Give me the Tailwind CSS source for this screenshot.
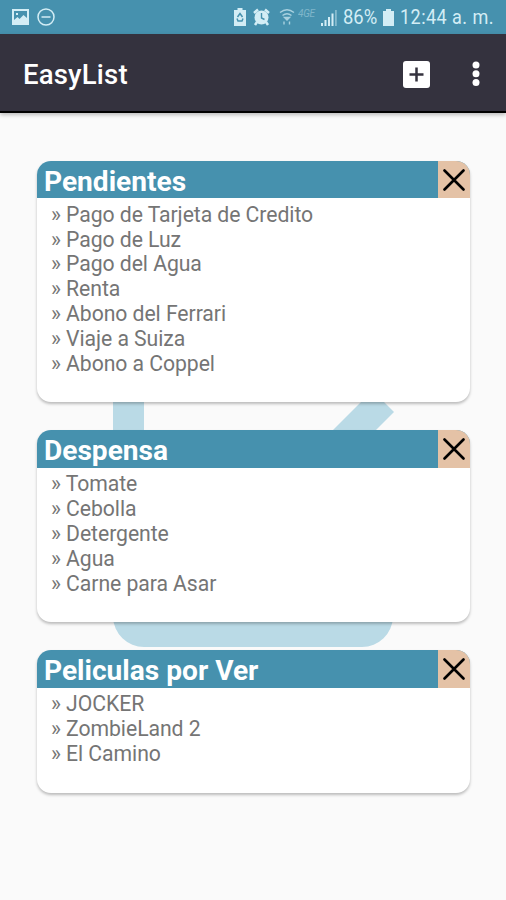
<!DOCTYPE html>
<html lang="es">
<head>
  <meta charset="UTF-8" />
  <meta name="viewport" content="width=device-width, initial-scale=1.0" />
  <title>EasyList</title>
  <script src="https://cdn.jsdelivr.net/npm/@tailwindcss/browser@4"></script>
</head>
<body class="h-[900px] overflow-hidden bg-[#fafafa] font-['Roboto',sans-serif]">
  <!-- Status bar -->
  <div class="flex h-[34px] items-center bg-[#4691ae] pl-3 pr-[13px] text-[#d3edf5]">
    <svg class="h-4 w-[17px]" viewBox="0 0 17 16" fill="currentColor" fill-rule="evenodd">
      <path d="M0 0h17v16H0zM2 2v9l3.500-3 2 2 4-4 3.500 3V2zM4 4h2v2H4z" />
    </svg>
    <svg class="ml-2 h-[18px] w-[18px]" viewBox="0 0 18 18" fill="none" stroke="currentColor" stroke-width="1.500">
      <circle cx="9" cy="9" r="8" />
      <path d="M4.500 9h9" />
    </svg>
    <div class="ml-auto flex items-center">
      <svg class="h-[18px] w-3" viewBox="0 0 12 18">
        <path d="M3.500 0h5v2H12v16H0V2h3.500z" fill="currentColor" />
        <path d="M3.500 9L6 5.500 8.500 9M9 10.500L8 13H4l-1-2.500" fill="none" stroke="#4691ae" stroke-width="1.500" />
      </svg>
      <svg class="ml-[7px] h-[18px] w-[17px]" viewBox="0 0 17 18">
        <path d="M1 5L5 1.500M16 5l-4-3.500M4 14l-2 3M13 14l2 3" stroke="currentColor" stroke-width="2.500" />
        <circle cx="8.500" cy="9.500" r="7" fill="currentColor" />
        <path d="M8.500 5v5l3 1.500" fill="none" stroke="#4691ae" stroke-width="1.400" />
      </svg>
      <svg class="ml-[9px] h-[18px] w-4 opacity-70" viewBox="0 0 16 18" fill="none" stroke="currentColor" stroke-width="1.400">
        <path d="M1 4.500q7-5.500 14 0M3.500 7.500q4.500-3.500 9 0" />
        <path d="M5.500 9.500h5L8 12zM5 13.500v3M10.500 13.500v3" fill="currentColor" />
      </svg>
      <span class="ml-[3px] mb-1.5 w-[21px] text-[10px] leading-3 tracking-tight italic opacity-40">4GE</span>
      <svg class="ml-[2px] h-[17px] w-4" viewBox="0 0 16 17" fill="currentColor">
        <path d="M0 14h2v3H0zM3.500 11h2v6h-2zM7 8h2v9H7zM10.500 4.500h2V17h-2z" />
        <path d="M14 1h1.800v16H14z" opacity=".45" />
      </svg>
      <span class="ml-[6px] w-[34px] origin-left scale-x-[.9] pt-px text-[20.500px] leading-none">86%</span>
      <svg class="ml-[6px] h-[17px] w-[11px]" viewBox="0 0 11 17" fill="currentColor">
        <path d="M3 0h5v2h3v15H0V2h3z" />
      </svg>
      <span class="ml-[6px] w-[93px] origin-left scale-x-[.88] whitespace-nowrap pt-px text-[20.500px] leading-none tracking-[0.500px]">12:44 a. m.</span>
    </div>
  </div>

  <!-- App bar -->
  <header class="flex h-[79px] items-center border-b-2 border-black bg-[#34323e] pl-[23px] pr-[26px] pt-[3px] text-white shadow-[0_2px_4px_rgba(0,0,0,0.25)]">
    <h1 class="pt-0.5 text-[27.500px] font-medium leading-none tracking-[0.200px]">EasyList</h1>
    <svg class="ml-auto h-[27px] w-[27px]" viewBox="0 0 27 27">
      <rect width="27" height="27" rx="3" fill="white" />
      <path d="M13.500 6.500v14M6.500 13.500h14" stroke="#34323e" stroke-width="2.500" />
    </svg>
    <svg class="ml-[42px] h-[26px] w-2" viewBox="0 0 8 26" fill="white">
      <circle cx="4" cy="4" r="3.500" />
      <circle cx="4" cy="12.700" r="3.500" />
      <circle cx="4" cy="21.400" r="3.500" />
    </svg>
  </header>

  <main class="relative px-9 pt-[47.500px]">
    <!-- Logo behind the lists -->
    <svg class="absolute left-[113px] top-[254px] h-[281px] w-[282px]" viewBox="0 0 282 281" fill="#badae6">
      <path d="M0 0h31v249h218v-80h31v81a31 31 0 0 1-31 30H31a31 31 0 0 1-31-30z" />
      <path d="M259.500 23.500L281 45 157 169 89 101 110 79.500 157 126z" />
    </svg>

    <div id="lists" class="relative flex flex-col gap-[28px] pl-px"></div>
  </main>

  <script>
    const lists = [
      {
        title: "Pendientes",
        height: 241.5,
        items: ["Pago de Tarjeta de Credito", "Pago de Luz", "Pago del Agua", "Renta", "Abono del Ferrari", "Viaje a Suiza", "Abono a Coppel"],
      },
      {
        title: "Despensa",
        height: 192,
        items: ["Tomate", "Cebolla", "Detergente", "Agua", "Carne para Asar"],
      },
      {
        title: "Peliculas por Ver",
        height: 142.5,
        items: ["JOCKER", "ZombieLand 2", "El Camino"],
      },
    ];

    document.querySelector("#lists").innerHTML = lists.map((list) => `
      <section class="w-[433px] overflow-hidden rounded-[14px] bg-white shadow-[0_2px_3px_rgba(0,0,0,0.25)]" style="height: ${list.height}px">
        <div class="flex h-[37.500px] bg-[#4691ae]">
          <h2 class="flex-1 pl-[7px] pt-[2px] text-[28.100px] font-bold leading-[38px] text-white">${list.title}</h2>
          <button class="flex w-8 items-center justify-center bg-[#e4c2a6] pt-px">
            <svg class="h-[22px] w-[22px]" viewBox="0 0 22 22" fill="none" stroke="black" stroke-width="2.600" stroke-linecap="round">
              <path d="M1.500 1.500l19 19M20.500 1.500l-19 19" />
            </svg>
          </button>
        </div>
        <ul class="pl-[14px] pt-[4.800px] text-[21.200px] leading-[24.830px] tracking-[-0.060px] text-[#757575]">
          ${list.items.map((item) => `<li>» ${item}</li>`).join("")}
        </ul>
      </section>`).join("");
  </script>
</body>
</html>
